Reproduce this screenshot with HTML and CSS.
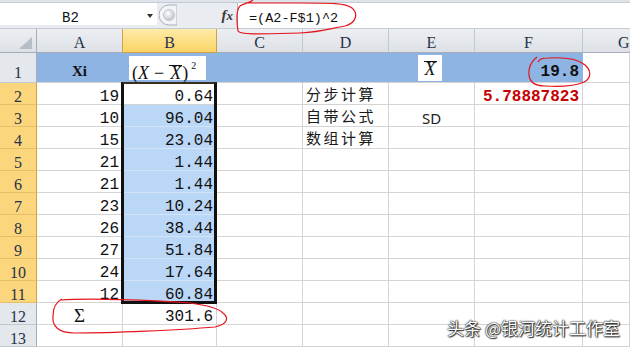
FILE: index.html
```html
<!DOCTYPE html>
<html lang="zh">
<head>
    <meta charset="UTF-8">
    <meta name="viewport" content="width=device-width, initial-scale=1.0">
    <title>标准差计算</title>
    <link rel="stylesheet" href="styles.css">
</head>
<body>
    <div class="ribbon-edge"></div>
    <div class="fbar">
        <div class="namebox"><span class="name">B2</span><span class="drop"></span></div>
        <div class="grip">
            <svg width="18" height="22" viewBox="0 0 18 22">
                <defs>
                    <radialGradient id="knob" cx="0.4" cy="0.35" r="0.7">
                        <stop offset="0" stop-color="#ffffff"/>
                        <stop offset="1" stop-color="#b9bfc8"/>
                    </radialGradient>
                </defs>
                <path d="M10 1 A10 10 0 0 0 10 21 L18 21 L18 1 Z" fill="#f3f4f6" stroke="#aab1bb"/>
                <circle cx="10" cy="11" r="5.5" fill="url(#knob)" stroke="#c2c7cf"/>
            </svg>
        </div>
        <div class="fx">f<span>x</span></div>
        <div class="finput">=(A2-F$1)^2</div>
    </div>

    <div class="sheet">
        <div class="hd corner">
            <svg width="16" height="14" viewBox="0 0 16 14"><polygon points="15,1 15,13 2,13" fill="#b7bdc6"/></svg>
        </div>
        <div class="hd pre">A</div>
        <div class="hd on">B</div>
        <div class="hd">C</div>
        <div class="hd">D</div>
        <div class="hd">E</div>
        <div class="hd">F</div>
        <div class="hd cut">G</div>

        <div class="rh tall">1</div>
        <div class="c r1 ctr xi">Xi</div>
        <div class="c r1 eqcell">
            <div class="eq">(<i>X</i><span class="minus">−</span><i class="bar">X</i>)<sup>2</sup></div>
        </div>
        <div class="c r1"></div>
        <div class="c r1"></div>
        <div class="c r1 meancell">
            <div class="mean"><i class="bar">X</i></div>
        </div>
        <div class="c r1 num big">19.8</div>
        <div class="c"></div>

        <div class="rh on">2</div>
        <div class="c num">19</div>
        <div class="c num">0.64</div>
        <div class="c"></div>
        <div class="c cjk">分步计算</div>
        <div class="c"></div>
        <div class="c num red">5.78887823</div>
        <div class="c"></div>

        <div class="rh on">3</div>
        <div class="c num">10</div>
        <div class="c num sel">96.04</div>
        <div class="c"></div>
        <div class="c cjk">自带公式</div>
        <div class="c ctr sd">SD</div>
        <div class="c"></div>
        <div class="c"></div>

        <div class="rh on">4</div>
        <div class="c num">15</div>
        <div class="c num sel">23.04</div>
        <div class="c"></div>
        <div class="c cjk">数组计算</div>
        <div class="c"></div>
        <div class="c"></div>
        <div class="c"></div>

        <div class="rh on">5</div>
        <div class="c num">21</div>
        <div class="c num sel">1.44</div>
        <div class="c"></div>
        <div class="c"></div>
        <div class="c"></div>
        <div class="c"></div>
        <div class="c"></div>

        <div class="rh on">6</div>
        <div class="c num">21</div>
        <div class="c num sel">1.44</div>
        <div class="c"></div>
        <div class="c"></div>
        <div class="c"></div>
        <div class="c"></div>
        <div class="c"></div>

        <div class="rh on">7</div>
        <div class="c num">23</div>
        <div class="c num sel">10.24</div>
        <div class="c"></div>
        <div class="c"></div>
        <div class="c"></div>
        <div class="c"></div>
        <div class="c"></div>

        <div class="rh on">8</div>
        <div class="c num">26</div>
        <div class="c num sel">38.44</div>
        <div class="c"></div>
        <div class="c"></div>
        <div class="c"></div>
        <div class="c"></div>
        <div class="c"></div>

        <div class="rh on">9</div>
        <div class="c num">27</div>
        <div class="c num sel">51.84</div>
        <div class="c"></div>
        <div class="c"></div>
        <div class="c"></div>
        <div class="c"></div>
        <div class="c"></div>

        <div class="rh on">10</div>
        <div class="c num">24</div>
        <div class="c num sel">17.64</div>
        <div class="c"></div>
        <div class="c"></div>
        <div class="c"></div>
        <div class="c"></div>
        <div class="c"></div>

        <div class="rh on">11</div>
        <div class="c num">12</div>
        <div class="c num sel">60.84</div>
        <div class="c"></div>
        <div class="c"></div>
        <div class="c"></div>
        <div class="c"></div>
        <div class="c"></div>

        <div class="rh">12</div>
        <div class="c ctr sigma">Σ</div>
        <div class="c num">301.6</div>
        <div class="c"></div>
        <div class="c"></div>
        <div class="c"></div>
        <div class="c"></div>
        <div class="c"></div>

        <div class="rh">13</div>
        <div class="c"></div>
        <div class="c"></div>
        <div class="c"></div>
        <div class="c"></div>
        <div class="c"></div>
        <div class="c"></div>
        <div class="c"></div>
    </div>

    <!-- selection frame around B2:B11 -->
    <div class="selbox"></div>

    <!-- hand-drawn red marks -->
    <svg class="marks" width="630" height="348" viewBox="0 0 630 348">
        <path d="M253,0 C250,3 244,3 240,6 C236,10 237,24 238,31 C240,35 262,34 300,33 C322,32 332,28 345,26 C357,23 358,13 352,8 C346,3 330,3 300,3 L245,3"/>
        <path d="M537,57 C533,60 530,64 529,70 C528,80 532,86 545,86 C560,87 575,86 584,82 C592,78 591,70 585,65 C578,59 565,57 548,58 C542,58 539,59 538,62"/>
        <path d="M60,300 C90,298 150,300 190,303 C205,305 218,308 223,313 C229,318 228,324 215,327 C180,330 110,333 75,333 C58,333 52,326 53,316 C53,308 56,302 62,299"/>
    </svg>

    <div class="watermark">头条 @银河统计工作室</div>
</body>
</html>
```

FILE: styles.css
```css
* {
    box-sizing: border-box;
}

html, body {
    overflow: hidden;
}

body {
    margin: 0;
    width: 630px;
    height: 348px;
    position: relative;
    background: #fff;
    color: #111;
    font-family: "Liberation Mono", monospace;
}

/* formula bar */
.ribbon-edge {
    height: 3px;
    background: #dfe4ea;
    border-bottom: 1px solid #c4cbd5;
}

.fbar {
    display: flex;
    height: 26px;
    background: #e9ecf0;
    border-bottom: 1px solid #c4cbd5;
}

.namebox {
    display: flex;
    align-items: flex-start;
    width: 157px;
    height: 22px;
    background: #fff;
}

.name {
    flex: 1;
    text-align: center;
    font-size: 14px;
    line-height: 16px;
    padding: 7px 6px 0 0;
}

.drop {
    width: 0;
    height: 0;
    margin: 11px 4px 0 0;
    border-left: 3px solid transparent;
    border-right: 3px solid transparent;
    border-top: 4px solid #333;
}

.grip {
    margin-left: 2px;
    padding-top: 1px;
}

.fx {
    margin-left: auto;
    margin-right: 4px;
    padding-top: 4px;
    font: italic bold 15px/16px "Liberation Serif", serif;
    color: #3a3a3a;
}

.fx span {
    font-size: 13px;
}

.finput {
    flex: 0 0 393px;
    background: #fff;
    border-left: 1px solid #b5bcc6;
    padding: 8px 0 0 11px;
    font-size: 13.5px;
    line-height: 16px;
}

/* sheet grid */
.sheet {
    display: grid;
    grid-template-columns: 37px 86px 94px 86px 86px 86px 108px 47px;
    grid-template-rows: 24px 30px repeat(12, 22px);
    width: 630px;
}

.hd {
    background: linear-gradient(#eceef2, #dde1e6);
    border-right: 1px solid #c2c8d0;
    border-bottom: 1px solid #a4adb9;
    text-align: center;
    font: 16px/16px "Liberation Serif", serif;
    color: #26324a;
    padding-top: 6px;
}

.hd.cut {
    text-align: left;
    padding-left: 35px;
    border-right: none;
}

.hd.pre {
    border-right-color: #cfa24a;
}

.hd.on {
    background: linear-gradient(#fdeba8, #fcd465);
    border-right-color: #cfa24a;
    border-bottom-color: #cfa24a;
}

.corner {
    display: flex;
    justify-content: flex-end;
    align-items: flex-end;
    padding: 0 3px 2px 0;
    border-right-color: #a4adb9;
}

.rh {
    background: #e4e7eb;
    border-right: 1px solid #a4adb9;
    border-bottom: 1px solid #c2c8d0;
    text-align: center;
    font: 16px/16px "Liberation Serif", serif;
    color: #26324a;
    padding-top: 6px;
}

.rh.tall {
    padding-top: 12px;
}

.rh.on {
    background: #fbd67c;
    border-bottom-color: #e6bf69;
    border-right-color: #cfa24a;
}

.c {
    border-right: 1px solid #d4d4d4;
    border-bottom: 1px solid #d4d4d4;
    font-size: 16px;
    line-height: 16px;
    padding: 6px 3px 0;
    white-space: nowrap;
}

.num {
    text-align: right;
}

.ctr {
    text-align: center;
}

.sel {
    background: #bad7f7;
    border-bottom-color: #d3e4f7;
}

.red {
    color: #c40000;
    font-weight: bold;
}

.cjk {
    font: 15px/15px "Noto Sans CJK SC", sans-serif;
    letter-spacing: 2.5px;
    padding-top: 3px;
    color: #1a1a1a;
}

.sd {
    font: 15px/16px "Noto Sans", sans-serif;
    padding-top: 5px;
    color: #222;
}

.sigma {
    font: 19px/16px "Liberation Serif", serif;
    padding-top: 5px;
}

/* header row 1 */
.r1 {
    background: #8db4e2;
    border-right-color: #8db4e2;
}

.xi {
    font: bold 15px/16px "Liberation Serif", serif;
    padding-top: 10px;
}

.big {
    font-weight: bold;
    padding-top: 11px;
}

.eqcell {
    padding: 3px 0 0 6px;
}

.eq {
    width: 77px;
    height: 24px;
    background: #fff;
    padding: 4px 0 0 3px;
    font: 18px/18px "Liberation Serif", serif;
    color: #111;
}

.minus {
    margin: 0 5px;
}

.eq sup {
    font-size: 10px;
    position: relative;
    top: -3px;
    margin-left: 3px;
}

.bar {
    display: inline-block;
    border-top: 1px solid #111;
    line-height: 15px;
    padding: 0 1px;
}

.meancell {
    padding: 2px 0 0 29px;
}

.mean {
    width: 24px;
    height: 26px;
    background: #fff;
    text-align: center;
    padding-top: 5px;
    font: 18px/18px "Liberation Serif", serif;
}

/* overlays */
.selbox {
    position: absolute;
    left: 121px;
    top: 82px;
    width: 96px;
    height: 222px;
    border: 3px solid #111;
    border-top: 2px solid #3d2f1f;
}

.marks {
    position: absolute;
    left: 0;
    top: 0;
    pointer-events: none;
}

.marks path {
    fill: none;
    stroke: #e5141c;
    stroke-width: 1.2;
}

.watermark {
    position: absolute;
    right: 10px;
    top: 318px;
    font: 17px/20px "Noto Sans CJK SC", sans-serif;
    color: #fff;
    text-shadow: 0 0 2px #000, 0 0 1px #000, 1px 1px 1px #444;
}
```
